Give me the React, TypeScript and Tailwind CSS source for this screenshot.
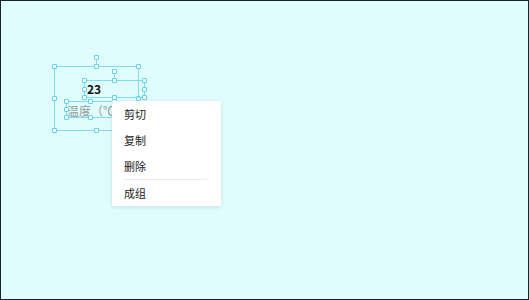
import React from "react";

const font = { fontFamily: '"Noto Sans CJK SC", "Noto Sans", sans-serif' };

function Handle({ x, y }: { x: number; y: number }) {
  return (
    <div
      className="absolute w-[5px] h-[5px] bg-white border border-[#5cd3ec] rounded-[1px]"
      style={{ left: x - 2, top: y - 2 }}
    />
  );
}

// selection frame with 8 handles + rotate knob
function Frame({
  x,
  y,
  w,
  h,
  rotate = true,
}: {
  x: number;
  y: number;
  w: number;
  h: number;
  rotate?: boolean;
}) {
  const pts = [
    [x, y],
    [x + w / 2, y],
    [x + w, y],
    [x, y + h / 2],
    [x + w, y + h / 2],
    [x, y + h],
    [x + w / 2, y + h],
    [x + w, y + h],
  ];
  return (
    <>
      <div
        className="absolute border border-[#7adff0]"
        style={{ left: x, top: y, width: w + 1, height: h + 1 }}
      />
      {rotate && (
        <div
          className="absolute w-px bg-[#7adff0]"
          style={{ left: x + w / 2, top: y - 9, height: 9 }}
        />
      )}
      {rotate && <Handle x={x + w / 2} y={y - 9} />}
      {pts.map(([px, py], i) => (
        <Handle key={i} x={Math.round(px)} y={Math.round(py)} />
      ))}
    </>
  );
}

export default function App() {
  const items = ["剪切", "复制", "删除"];
  return (
    <div
      className="w-[529px] h-[300px] bg-[#e0fcfd] border border-[#1e2224] relative overflow-hidden"
      style={font}
    >
      {/* canvas elements */}
      <div className="absolute left-[86px] top-[80px] text-[12px] font-bold text-[#111] leading-[16px]">
        23
      </div>
      <div className="absolute left-[66px] top-[102px] text-[12px] text-[#9a9a9a] leading-[16px] whitespace-nowrap">
        温度（℃）
      </div>

      <Frame x={53} y={65} w={84} h={64} />
      <Frame x={83} y={79} w={60} h={17} />
      <Frame x={65} y={100} w={48} h={16} rotate={false} />
      <Handle x={113} y={79} />

      {/* context menu */}
      <div className="absolute left-[111px] top-[100px] w-[109px] bg-white shadow-[0_1px_4px_rgba(0,0,0,0.12)] px-[12px] flex flex-col">
        {items.map((t) => (
          <div key={t} className="h-[26px] flex items-center text-[11px] text-[#222]">
            {t}
          </div>
        ))}
        <div className="h-px bg-[#ebebeb] mr-[2px]" />
        <div className="h-[26px] flex items-center text-[11px] text-[#222]">成组</div>
      </div>
    </div>
  );
}
